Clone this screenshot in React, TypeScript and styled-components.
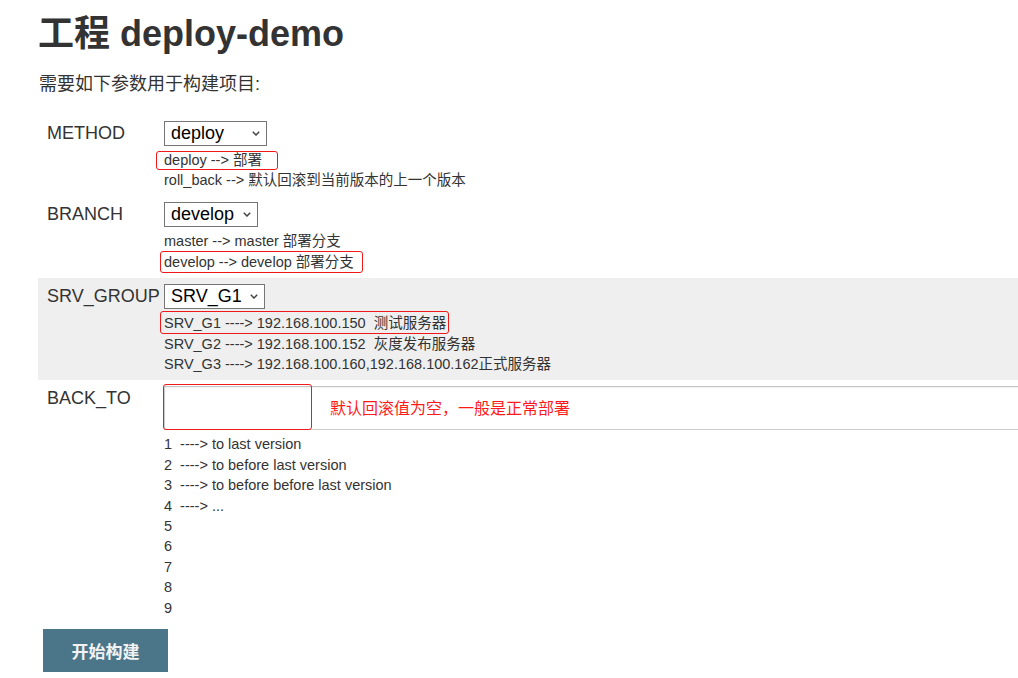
import React from "react";
import styled, { createGlobalStyle } from "styled-components";

const GlobalStyle = createGlobalStyle`
  html, body {
    margin: 0;
    padding: 0;
    background: #ffffff;
    overflow: hidden;
  }
  body {
    font-family: "Liberation Sans", Arial, "Noto Sans CJK SC", sans-serif;
    color: #333333;
  }
  * { box-sizing: border-box; }
`;

const Page = styled.div`
  padding: 13px 0 0 38px;
  width: 100vw;
`;

const Title = styled.h1`
  margin: 0;
  font-size: 36px;
  line-height: 42px;
  font-weight: 700;
  color: #333333;
`;

const Intro = styled.p`
  margin: 17px 0 18.5px 1px;
  font-size: 18px;
  line-height: 24px;
  color: #333333;
`;

const ParamTable = styled.div`
  display: flex;
  flex-direction: column;
`;

const ParamRow = styled.div<{ $shaded?: boolean }>`
  display: grid;
  grid-template-columns: 126px 1fr;
  padding: 6px 0 6px;
  background: ${(p) => (p.$shaded ? "#efefef" : "transparent")};
`;

const Label = styled.div`
  padding-left: 9px;
  font-size: 18px;
  line-height: 24px;
  color: #333333;
  white-space: nowrap;
`;

const Value = styled.div`
  display: flex;
  flex-direction: column;
  align-items: flex-start;
  min-width: 0;
`;

const SelectWrap = styled.div<{ $w: number }>`
  position: relative;
  width: ${(p) => p.$w}px;
  height: 25px;
  margin-bottom: 4px;
`;

const Select = styled.select`
  appearance: none;
  -webkit-appearance: none;
  width: 100%;
  height: 25px;
  margin: 0;
  padding: 0 0 0 6px;
  border: 1px solid #767676;
  border-radius: 0;
  background: #ffffff;
  color: #000000;
  font-family: "Liberation Sans", Arial, sans-serif;
  font-size: 18px;
  line-height: 23px;
  outline: none;
`;

const Chevron = styled.svg`
  position: absolute;
  right: 7px;
  top: 10px;
  width: 8px;
  height: 5px;
  pointer-events: none;
`;

const Hint = styled.div`
  position: relative;
  font-size: 14.5px;
  line-height: 20.4px;
  color: #333333;
  white-space: pre;
`;

const Highlight = styled.span<{ $l: number; $t: number; $w: number; $h: number }>`
  position: absolute;
  left: ${(p) => p.$l}px;
  top: ${(p) => p.$t}px;
  width: ${(p) => p.$w}px;
  height: ${(p) => p.$h}px;
  border: 1px solid #f01818;
  border-radius: 3px;
  pointer-events: none;
`;

const InputWrap = styled.div`
  position: relative;
  width: calc(100% + 40px);
  height: 44px;
  margin-bottom: 4px;
`;

const TextInput = styled.input`
  width: 100%;
  height: 44px;
  margin: 0;
  border: 1px solid #cccccc;
  border-top-color: #c4c4c4;
  box-shadow: inset 0 1px 2px rgba(0, 0, 0, 0.06);
  background: #ffffff;
  font-size: 16px;
  outline: none;
`;

const Note = styled.span`
  position: absolute;
  left: 166px;
  top: 13px;
  font-size: 16px;
  line-height: 20px;
  color: #ff1a1a;
  white-space: nowrap;
`;

const ButtonBar = styled.div`
  padding: 4.5px 0 0 5px;
`;

const BuildButton = styled.button`
  width: 125px;
  height: 43px;
  border: none;
  border-radius: 0;
  background: #4b7689;
  color: #f2f2f2;
  font-family: "Liberation Sans", Arial, "Noto Sans CJK SC", sans-serif;
  font-size: 17px;
  font-weight: 700;
  cursor: pointer;
`;

type Mark = { l: number; t: number; w: number; h: number };

const ChoiceSelect: React.FC<{ width: number; options: string[] }> = ({ width, options }) => (
  <SelectWrap $w={width}>
    <Select defaultValue={options[0]}>
      {options.map((o) => (
        <option key={o} value={o}>
          {o}
        </option>
      ))}
    </Select>
    <Chevron viewBox="0 0 8 5">
      <path d="M0.8 0.8 L4 4 L7.2 0.8" fill="none" stroke="#444" strokeWidth="1.5" />
    </Chevron>
  </SelectWrap>
);

const HintLine: React.FC<{ text: string; mark?: Mark }> = ({ text, mark }) => (
  <Hint>
    {text}
    {mark && <Highlight $l={mark.l} $t={mark.t} $w={mark.w} $h={mark.h} />}
  </Hint>
);

export default function App() {
  return (
    <>
      <GlobalStyle />
      <Page>
        <Title>工程 deploy-demo</Title>
        <Intro>需要如下参数用于构建项目:</Intro>
        <ParamTable>
          <ParamRow>
            <Label>METHOD</Label>
            <Value>
              <ChoiceSelect width={103} options={["deploy", "roll_back"]} />
              <HintLine text="deploy --> 部署" mark={{ l: -8, t: 1, w: 122, h: 19 }} />
              <HintLine text="roll_back --> 默认回滚到当前版本的上一个版本" />
            </Value>
          </ParamRow>
          <ParamRow>
            <Label>BRANCH</Label>
            <Value>
              <ChoiceSelect width={94} options={["develop", "master"]} />
              <HintLine text="master --> master 部署分支" />
              <HintLine text="develop --> develop 部署分支" mark={{ l: -4, t: -1, w: 203, h: 22 }} />
            </Value>
          </ParamRow>
          <ParamRow $shaded>
            <Label>SRV_GROUP</Label>
            <Value>
              <ChoiceSelect width={101} options={["SRV_G1", "SRV_G2", "SRV_G3"]} />
              <HintLine
                text="SRV_G1 ----> 192.168.100.150  测试服务器"
                mark={{ l: -4, t: -2, w: 289, h: 23 }}
              />
              <HintLine text="SRV_G2 ----> 192.168.100.152  灰度发布服务器" />
              <HintLine text="SRV_G3 ----> 192.168.100.160,192.168.100.162正式服务器" />
            </Value>
          </ParamRow>
          <ParamRow>
            <Label>BACK_TO</Label>
            <Value>
              <InputWrap>
                <TextInput type="text" />
                <Highlight $l={-1} $t={-2} $w={149} $h={46} />
                <Note>默认回滚值为空，一般是正常部署</Note>
              </InputWrap>
              <HintLine text="1  ----> to last version" />
              <HintLine text="2  ----> to before last version" />
              <HintLine text="3  ----> to before before last version" />
              <HintLine text="4  ----> ..." />
              <HintLine text="5" />
              <HintLine text="6" />
              <HintLine text="7" />
              <HintLine text="8" />
              <HintLine text="9" />
            </Value>
          </ParamRow>
        </ParamTable>
        <ButtonBar>
          <BuildButton type="button">开始构建</BuildButton>
        </ButtonBar>
      </Page>
    </>
  );
}
